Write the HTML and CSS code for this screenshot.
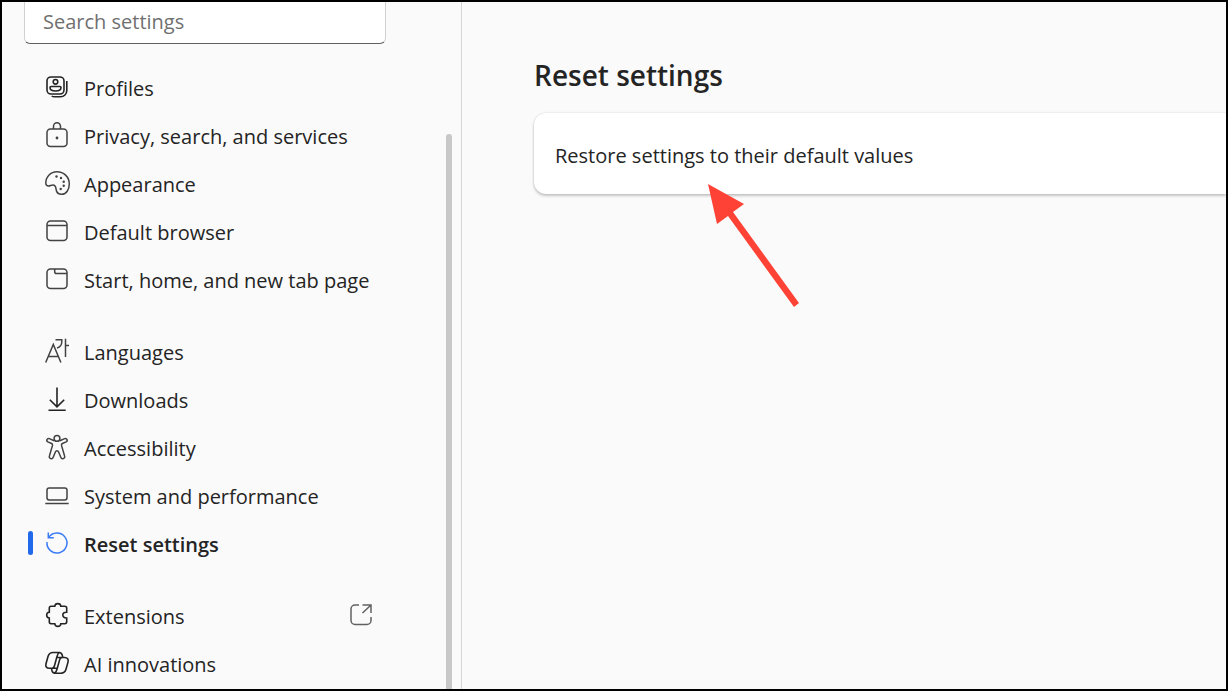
FILE: index.html
```html
<!DOCTYPE html>
<html lang="en">
<head>
<meta charset="utf-8">
<title>Settings</title>
<link rel="stylesheet" href="styles.css">
</head>
<body class="page">
<aside class="sidebar">
  <input class="search" type="search" placeholder="Search settings" aria-label="Search settings">
  <nav class="nav" aria-label="Settings">
    <div class="group">
      <a class="item" href="#profiles">
        <svg class="icon bold" viewBox="0 0 24 24"><rect x="2" y="2" width="17" height="17" rx="4"/><circle cx="10.5" cy="6.8" r="2.3"/><path d="M6 11.5h9q1 0 1 1c0 2.3-2.6 3.5-5.5 3.5S5 14.8 5 12.5q0-1 1-1zM21.8 6v9.5a6.300 6.300 0 0 1-6.300 6.300H9.500q-1.800 0-2.800-.8"/></svg>
        <span class="label">Profiles</span></a>
      <a class="item" href="#privacy">
        <svg class="icon" viewBox="0 0 24 24"><rect x="2" y="6" width="20" height="17.500" rx="3.500"/><path d="M8.500 6V3.200a3.500 3.500 0 0 1 7 0V6"/><circle class="dot" cx="12" cy="15" r="1.400"/></svg>
        <span class="label">Privacy, search, and services</span></a>
      <a class="item" href="#appearance">
        <svg class="icon" viewBox="0 0 24 24"><path d="M.8 12.500C.5 6 5.500.7 12 .7c6.500 0 12.300 5 12.300 12.300 0 5.500-3 10.300-7.600 10.300-4.200 0-5.400-2.600-5.700-5.500-.3-2.700-1.500-4-3.500-3.800-1.300.1-2.600.9-4 .9C1.800 14.900.9 14 .8 12.500z"/><g class="dot"><circle cx="11.500" cy="5.500" r="1.200"/><circle cx="16" cy="7" r="1.200"/><circle cx="18.700" cy="10.700" r="1.200"/><circle cx="18.700" cy="14.700" r="1.200"/><circle cx="15.700" cy="18" r="1.200"/></g></svg>
        <span class="label">Appearance</span></a>
      <a class="item" href="#browser">
        <svg class="icon" viewBox="0 0 24 24"><rect x="2" y="2" width="20" height="19.500" rx="3.500"/><path d="M2 6.500h20"/></svg>
        <span class="label">Default browser</span></a>
      <a class="item" href="#start">
        <svg class="icon" viewBox="0 0 24 24"><rect x="2" y="2" width="20" height="19.500" rx="3.500"/><path d="M9.700 2v2.700a1.800 1.800 0 0 0 1.800 1.800H22"/></svg>
        <span class="label">Start, home, and new tab page</span></a>
    </div>
    <div class="group">
      <a class="item" href="#languages">
        <svg class="icon" viewBox="0 0 24 24"><path d="M.7 23.500 8.300 5.500l7.600 18M3.300 17.400h10M10.500.8h6.300v1.700c0 3.500-1.500 5.600-4.800 6.500M20.500-.3v18.200M20.500 6.500H24"/></svg>
        <span class="label">Languages</span></a>
      <a class="item" href="#downloads">
        <svg class="icon bold" viewBox="0 0 24 24"><path d="M12 .5v19M4.800 12.700l7.200 7.100 7.200-7.100M3.500 23.300h17.200"/></svg>
        <span class="label">Downloads</span></a>
      <a class="item" href="#accessibility">
        <svg class="icon" viewBox="0 0 24 24"><circle cx="12" cy="3.400" r="2.900"/><path d="M9.200 5.700 4.300 3.600c-2.200-.9-3.500 2.300-1.400 3.300l3.700 1.600c.8.400 1.100 1 .9 1.900L4.400 21c-.9 2.700 2.900 3.800 3.800 1.300l2.300-5.600c.6-1.400 2.400-1.400 3 0l2.300 5.600c.9 2.500 4.700 1.400 3.800-1.300l-3.100-10.600c-.2-.9.100-1.500.9-1.900l3.700-1.600c2.100-1 .8-4.200-1.400-3.300l-4.900 2.100"/></svg>
        <span class="label">Accessibility</span></a>
      <a class="item" href="#system">
        <svg class="icon" viewBox="0 0 24 24"><rect x="2" y="5" width="20" height="12" rx="2.200"/><path d="M.3 20.500h23.400"/></svg>
        <span class="label">System and performance</span></a>
      <a class="item selected" href="#reset" aria-current="page">
        <svg class="icon" viewBox="0 0 24 24"><path d="M3.300 1.500v5.300h5.500M3.500 6.700A10 10 0 1 1 2 11"/></svg>
        <span class="label">Reset settings</span></a>
    </div>
    <div class="group">
      <a class="item" href="#extensions">
        <svg class="icon bold" viewBox="0 0 24 24"><path d="M6 3.300h3.800c.3-3.600 5.800-3.600 6 0h4c1.200 0 1.900.7 1.900 1.900v4c-5.200-.4-5.200 6.100 0 5.800v3.800c0 1.200-.7 1.900-1.900 1.900h-4c-.2 3.600-5.700 3.600-6 0H6c-1.200 0-1.700-.7-1.700-1.900V15c-3.500-.2-3.500-5.600 0-5.800v-4c0-1.200.5-1.900 1.700-1.900z"/></svg>
        <span class="label">Extensions</span>
        <svg class="icon external" viewBox="0 0 24 24"><path d="M10 2H6a4 4 0 0 0-4 4v11.500a4 4 0 0 0 4 4h12a4 4 0 0 0 4-4V14M13.500 2H22v8M22 2l-8.500 8"/></svg></a>
      <a class="item" href="#ai">
        <svg class="icon bold" viewBox="0 0 24 24"><path d="M6.800 17.300H4.300C1.500 17.300.3 15.500 1 12.700L3 5.500C3.800 2.800 5.200 1.500 8 1.500h6.200c1.700 0 2.500.8 3 2.500l.7 2.600M6.800 17.300c1.500 0 2.200-.8 2.600-2.300L12 5.500c.6-2.300 1-3.500 2.500-4M17.200 6.500h2.500c2.800 0 4 1.800 3.300 4.600l-2 7.200c-.8 2.700-2.200 3.900-5 3.900H9.800c-1.700 0-2.300-.7-2.800-2.400l-.6-2.500M17.200 6.500c-1.500 0-2.200.9-2.600 2.400L12 18.300c-.6 2.300-1 3.400-2.500 3.900M11.800 6.500h5.400M6.800 17.300h5.300"/></svg>
        <span class="label">AI innovations</span></a>
    </div>
  </nav>
  <div class="scrollbar"></div>
</aside>
<main class="content">
  <h1 class="title">Reset settings</h1>
  <button class="card" type="button">Restore settings to their default values</button>
  <svg class="arrow" viewBox="0 0 92 126"><path d="M1 1l36 20-11 8 66 91-5 4-66-91-11 8z"/></svg>
</main>
</body>
</html>
```

FILE: styles.css
```css
* { box-sizing: border-box; }

.page {
  margin: 0;
  height: 100vh;
  display: flex;
  overflow: hidden;
  border: 2px solid #000;
  background: #fafafa;
  color: #242424;
  font-family: "Open Sans", "Noto Sans", sans-serif;
  font-size: 20px;
  line-height: 28px;
}

.sidebar {
  position: relative;
  flex: none;
  width: 460px;
  padding: 0 75px 0 22px;
  border-right: 1px solid #d6d6d6;
  overflow: hidden;
}

.search {
  display: block;
  width: 100%;
  height: 42px;
  margin: 0;
  padding: 0 18px 2px;
  border: 1px solid #d1d1d1;
  border-top: 0;
  border-bottom-color: #616161;
  border-radius: 0 0 6px 6px;
  outline: 0;
  background: #fff;
  color: inherit;
  font: inherit;
}

.search::placeholder { color: #707070; opacity: 1; }

.nav {
  display: flex;
  flex-direction: column;
  gap: 24px;
  margin-top: 20px;
}

.item {
  position: relative;
  display: flex;
  align-items: center;
  gap: 15px;
  height: 48px;
  padding: 0 13px 0 21px;
  color: inherit;
  text-decoration: none;
  white-space: nowrap;
}

.label { padding-top: 2px; }

.icon {
  flex: none;
  width: 24px;
  height: 24px;
  margin-bottom: 2px;
  overflow: visible;
  fill: none;
  stroke: #424242;
  stroke-width: 1.5;
}

.bold { stroke: #242424; stroke-width: 1.6; }
.dot { fill: #424242; stroke: none; }
.external { margin-left: auto; stroke: #616161; }

.selected { font-weight: 600; }
.selected .icon { stroke: #3b7cf5; }

.selected::before {
  content: "";
  position: absolute;
  left: 4px;
  top: 11px;
  width: 5px;
  height: 24px;
  border-radius: 3px;
  background: #2169eb;
}

.scrollbar {
  position: absolute;
  top: 132px;
  right: 9px;
  bottom: 0;
  width: 6px;
  border-radius: 3px 3px 0 0;
  background: #c8c8c8;
}

.content {
  position: relative;
  flex: 1;
  min-width: 0;
  padding: 53px 0 0 72px;
}

.title {
  margin: 0 0 18px;
  font-size: 28px;
  font-weight: 600;
  line-height: 40px;
}

.card {
  display: block;
  width: 100%;
  height: 81px;
  padding: 4px 21px 0;
  border: 0;
  border-radius: 12px 0 0 12px;
  background: #fff;
  box-shadow: 0 0 2px rgba(0, 0, 0, .16), 0 2px 3px rgba(0, 0, 0, .2);
  color: inherit;
  font: inherit;
  text-align: left;
}

.arrow {
  position: absolute;
  left: 245px;
  top: 181px;
  width: 92px;
  height: 126px;
  fill: #ff4236;
}
```
